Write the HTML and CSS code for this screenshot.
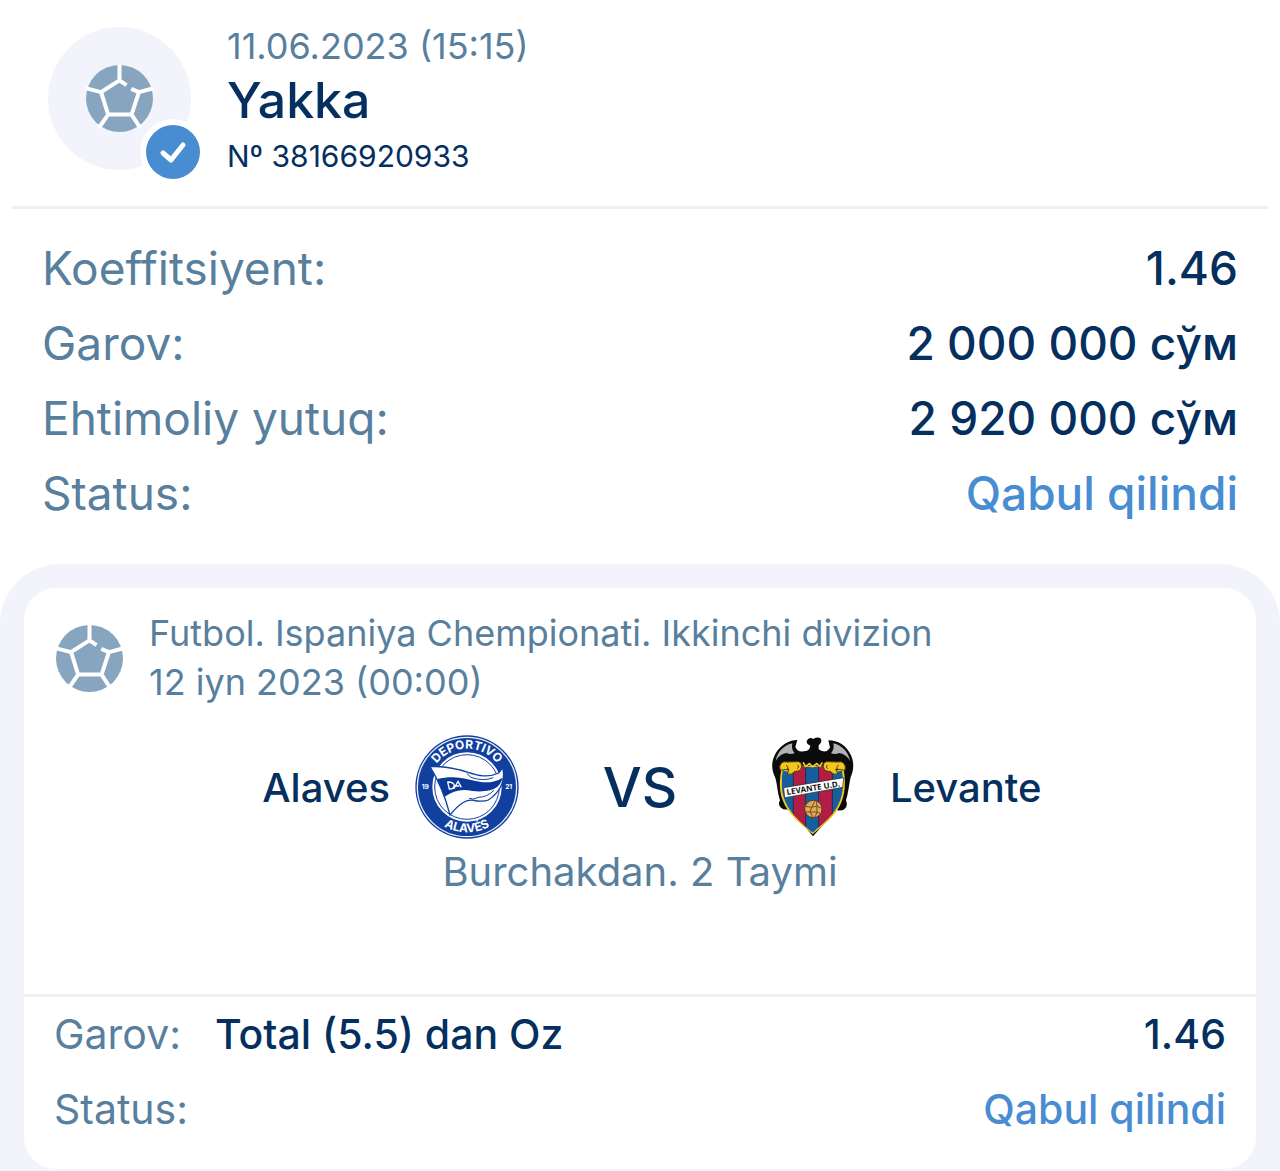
FILE: index.html
```
<!DOCTYPE html>
<html lang="uz">
<head>
    <meta charset="UTF-8">
    <meta name="viewport" content="width=device-width, initial-scale=1.0">
    <title>Yakka № 38166920933</title>
    <link rel="stylesheet" href="styles.css">
</head>
<body>
    <!-- Shared football icon -->
    <svg class="sprite" aria-hidden="true">
        <symbol id="ball" viewBox="0 0 200 200">
            <circle cx="100" cy="100" r="100" fill="#87a5be"/>
            <path d="M121 60 L100 46 L45 81 L66 148 H136 L158 81 L135 71 M100 46 V-4 M45 81 L-2 69 M66 148 L38 188 M136 148 L162 188 M158 81 L202 69" fill="none" stroke="currentColor" stroke-width="12"/>
        </symbol>
    </svg>

    <header class="bet-header">
        <div class="avatar">
            <svg class="ball-icon"><use href="#ball"/></svg>
            <svg class="badge" viewBox="0 0 66 66" aria-hidden="true">
                <circle cx="33" cy="33" r="33" fill="#fff"/>
                <circle cx="33" cy="33" r="27" fill="#488cd2"/>
                <path d="M23 34 L31 41 L43 26" fill="none" stroke="#fff" stroke-width="5" stroke-linecap="round" stroke-linejoin="round"/>
            </svg>
        </div>
        <div class="bet-title">
            <p class="bet-date">11.06.2023 (15:15)</p>
            <h1>Yakka</h1>
            <p class="bet-number">Nº 38166920933</p>
        </div>
    </header>

    <dl class="summary">
        <div class="row">
            <dt>Koeffitsiyent:</dt>
            <dd>1.46</dd>
        </div>
        <div class="row">
            <dt>Garov:</dt>
            <dd>2 000 000 сўм</dd>
        </div>
        <div class="row">
            <dt>Ehtimoliy yutuq:</dt>
            <dd>2 920 000 сўм</dd>
        </div>
        <div class="row">
            <dt>Status:</dt>
            <dd class="status">Qabul qilindi</dd>
        </div>
    </dl>

    <main class="events">
        <section class="card">
            <div class="event-header">
                <svg class="ball-icon"><use href="#ball"/></svg>
                <div class="event-info">
                    <p>Futbol. Ispaniya Chempionati. Ikkinchi divizion</p>
                    <p>12 iyn 2023 (00:00)</p>
                </div>
            </div>

            <div class="teams">
                <div class="team home">
                    <span>Alaves</span>
                    <svg class="crest" viewBox="48 30 312 312">
                        <defs>
                            <path id="arc-top" d="M90 185 A114 114 0 0 1 318 185"/>
                            <path id="arc-bottom" d="M67 185 A137 137 0 0 0 341 185"/>
                        </defs>
                        <circle cx="204" cy="186" r="155" fill="#12409f"/>
                        <circle cx="204" cy="186" r="149" fill="none" stroke="#e9effa" stroke-width="4"/>
                        <circle cx="204" cy="186" r="101" fill="#fff" stroke="#fff" stroke-width="6"/>
                        <circle cx="204" cy="186" r="97" fill="none" stroke="#12409f" stroke-width="3"/>
                        <text class="crest-text"><textPath href="#arc-top" startOffset="50%">DEPORTIVO</textPath></text>
                        <text class="crest-text"><textPath href="#arc-bottom" startOffset="50%">ALAVÉS</textPath></text>
                        <text class="crest-year" x="79" y="193">19</text>
                        <text class="crest-year" x="329" y="193">21</text>
                        <path d="M93 125 C130 122 153 128 184 135 C223 145 257 164 299 144 L311 128 C321 169 301 204 268 225 C258 230 246 229 232 228 C204 218 181 236 153 270 C139 216 121 170 93 125 Z" fill="#fff" stroke="#12409f" stroke-width="4" stroke-linejoin="round"/>
                        <path d="M115 162 C152 153 184 157 213 164 C249 173 278 178 311 158 C304 181 293 190 274 195 C252 201 234 199 220 198 C189 190 161 198 137 215 Z" fill="#0c389a"/>
                        <path d="M204 146 L216 157 Q251 170 283 158 M210 220 Q225 226 237 217 Q264 217 285 196" fill="none" stroke="#12409f" stroke-width="3"/>
                        <path d="M146 171 L151 192 Q164 193 166 181 Q163 170 145 171 M164 192 L177 169 L187 187 M169 183 H181" fill="none" stroke="#fff" stroke-width="4"/>
                    </svg>
                </div>
                <span class="versus">VS</span>
                <div class="team away">
                    <svg class="crest" viewBox="36 30 312 312">
                        <defs>
                            <clipPath id="shield">
                                <path d="M101 137 L132 142 Q151 133 155 124 L191 127 L225 122 Q232 137 253 142 L279 137 C286 187 281 222 258 256 C241 281 220 297 191 323 C162 298 139 278 121 252 C99 218 94 185 101 137 Z"/>
                            </clipPath>
                        </defs>
                        <!-- bat -->
                        <path d="M174 46 Q183 34 193 42 Q205 34 216 41 Q220 53 209 61 L209 73 Q220 82 234 78 L243 68 L238 46 C267 46 292 61 306 91 C316 113 314 137 305 156 C300 178 298 205 291 226 Q298 244 286 253 Q274 260 263 254 L192 334 L121 251 Q107 257 97 249 Q85 240 93 226 C85 202 85 176 78 156 C66 132 67 108 80 85 C94 62 118 45 145 45 L139 66 Q147 83 163 79 Q177 80 182 70 L184 62 Q170 57 174 46 Z" fill="#0b0b0c"/>
                        <path d="M130 55 C102 62 84 83 80 108 Q90 88 112 84 Q124 89 137 85 Q126 72 130 55 Z" fill="#aeb1b5"/>
                        <path d="M253 55 C281 62 299 83 303 108 Q293 88 271 84 Q259 89 246 85 Q257 72 253 55 Z" fill="#aeb1b5"/>
                        <!-- striped shield -->
                        <path d="M97 132 L132 138 L155 122 H225 L253 138 L284 132 C293 187 286 225 262 260 C244 285 220 302 191 328 C160 302 136 283 117 256 C92 219 88 184 97 132 Z" fill="#f3c620"/>
                        <g clip-path="url(#shield)">
                            <path d="M88 110 H300 V330 H88 Z" fill="#145f9e"/>
                            <path d="M133 110 H170 V330 H133 Z M209 110 H250 V330 H209 Z" fill="#b01e45"/>
                            <path d="M133 110 V330 M170 110 V330 M209 110 V330 M250 110 V330" stroke="#34234c" stroke-width="3"/>
                        </g>
                        <path d="M92 125 Q97 107 113 111 L149 110 Q159 112 158 126 Q154 140 138 139 Q128 151 115 147 L120 132 L94 136 Z M289 125 Q284 107 268 111 L233 110 Q222 112 223 126 Q227 140 243 139 Q253 151 267 147 L260 132 L288 136 Z" fill="#f3c620" stroke="#54420c" stroke-width="3"/>
                        <path d="M111 120 Q120 124 116 132 M146 120 Q154 127 144 131 M269 120 Q260 124 265 132 M235 120 Q227 127 237 131" fill="none" stroke="#54420c" stroke-width="3"/>
                        <path d="M162 112 L170 124 L181 116 L191 125 L203 116 L213 124 L220 112" fill="none" stroke="#f3c620" stroke-width="5"/>
                        <path d="M104 188 L284 158 L281 187 L107 218 Z" fill="#fff" stroke="#222" stroke-width="2"/>
                        <text class="crest-name" transform="translate(194 197) rotate(-9)">LEVANTE U.D.</text>
                        <circle cx="193" cy="252" r="26" fill="#e4aa55" stroke="#573c20" stroke-width="3"/>
                        <path d="M171 244 L188 247 L197 229 M188 247 L183 261 L169 261 M183 261 L193 277 M188 247 L204 243 L217 250 M204 243 L202 229 M183 261 L204 261 L215 266 M204 243 L204 261 L198 277" fill="none" stroke="#704c25" stroke-width="3"/>
                    </svg>
                    <span>Levante</span>
                </div>
            </div>
            <p class="market">Burchakdan. 2 Taymi</p>

            <dl class="outcome">
                <div class="row">
                    <dt>Garov:</dt>
                    <dd class="pick">Total (5.5) dan Oz</dd>
                    <dd>1.46</dd>
                </div>
                <div class="row">
                    <dt>Status:</dt>
                    <dd class="status">Qabul qilindi</dd>
                </div>
            </dl>
        </section>
    </main>
</body>
</html>
```
FILE: styles.css
```
:root {
    --text-color: #042f5e;
    --muted-color: #587f9d;
    --accent-color: #488cd2;
    --panel-color: #f3f4fb;
    --line-color: #eff0f2;
}
* {
    box-sizing: border-box;
}
body {
    margin: 0;
    background-color: #fff;
    color: var(--text-color);
    font-family: Inter, "Liberation Sans", sans-serif;
}
h1, p, dl, dt, dd {
    margin: 0;
}
.sprite {
    position: absolute;
    width: 0;
    height: 0;
}
.ball-icon {
    width: 67px;
    height: 67px;
    flex: none;
    color: #fff;
}
.bet-header {
    display: flex;
    gap: 36px;
    margin: 0 12px;
    padding: 27px 36px 36px;
    border-bottom: 3px solid var(--line-color);
}
.avatar {
    position: relative;
    display: flex;
    align-items: center;
    justify-content: center;
    width: 143px;
    height: 143px;
    flex: none;
    border-radius: 50%;
    background-color: var(--panel-color);
}
.badge {
    position: absolute;
    right: -15px;
    bottom: -15px;
    width: 66px;
    height: 66px;
}
.bet-title {
    height: 143px;
}
.bet-date {
    color: var(--muted-color);
    font-size: 36px;
    line-height: 38px;
}
.bet-title h1 {
    font-size: 50px;
    font-weight: 500;
    line-height: 70px;
}
.bet-number {
    font-size: 30px;
    line-height: 42px;
}
.row {
    display: flex;
    line-height: 75px;
}
.row dt {
    color: var(--muted-color);
}
.row dd {
    font-weight: 500;
}
.row dd:last-child {
    margin-left: auto;
}
.row .status {
    color: var(--accent-color);
}
.summary {
    padding: 22px 42px 33px;
    font-size: 46px;
}
.events {
    padding: 24px 24px 2px;
    border-radius: 60px 60px 0 0;
    background-color: var(--panel-color);
}
.card {
    padding: 21px 0 22px;
    border-radius: 32px;
    background-color: #fff;
}
.event-header {
    display: flex;
    align-items: center;
    gap: 26px;
    padding: 0 32px;
    color: var(--muted-color);
    font-size: 36px;
    line-height: 49px;
}
.teams {
    display: grid;
    grid-template-columns: 1fr 242px 1fr;
    align-items: center;
    margin-top: 28px;
}
.team {
    display: flex;
    align-items: center;
    gap: 25px;
    font-size: 40px;
    font-weight: 500;
}
.home {
    justify-content: flex-end;
}
.versus {
    text-align: center;
    font-size: 55px;
    font-weight: 500;
}
.crest {
    width: 104px;
    height: 104px;
    flex: none;
}
.crest text {
    fill: #fff;
    font-family: Inter, sans-serif;
    font-weight: 700;
    text-anchor: middle;
}
.crest .crest-text {
    font-size: 36px;
}
.crest .crest-year {
    font-size: 20px;
}
.crest .crest-name {
    fill: #111;
    font-family: "Open Sans", sans-serif;
    font-size: 24px;
}
.market {
    margin-top: 8px;
    padding-bottom: 98px;
    border-bottom: 3px solid var(--line-color);
    color: var(--muted-color);
    font-size: 40px;
    line-height: 49px;
    text-align: center;
}
.outcome {
    padding: 0 30px;
    font-size: 41px;
}
.pick {
    padding-left: 34px;
}
```
